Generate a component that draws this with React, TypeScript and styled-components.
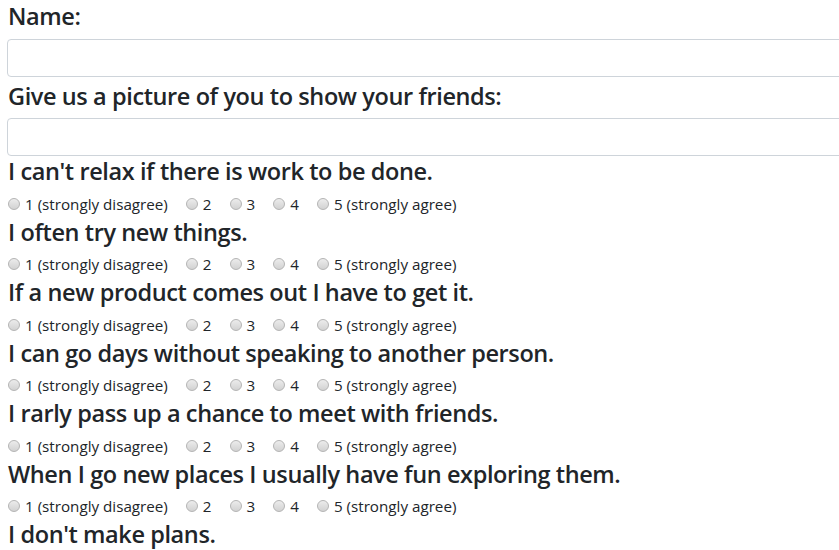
import React from "react";
import styled, { createGlobalStyle } from "styled-components";

const GlobalStyle = createGlobalStyle`
  html, body {
    margin: 0;
    padding: 0;
    background: #ffffff;
    overflow: hidden;
  }
  body {
    font-family: "Open Sans", "Noto Sans", sans-serif;
    color: #212529;
  }
`;

const Page = styled.form`
  padding: 2px 0 0 7px;
  overflow: hidden;
  width: 100vw;
  box-sizing: border-box;
`;

const Heading = styled.h4<{ $gap?: number }>`
  margin: 0 0 ${(p) => p.$gap ?? 8}px 0;
  font-size: 23.5px;
  line-height: 28.5px;
  font-weight: 600;
  letter-spacing: -0.4px;
  color: #212529;
  padding-left: 1px;
  white-space: nowrap;
`;

const Field = styled.input<{ $gapAfter: number }>`
  display: block;
  box-sizing: border-box;
  width: 900px;
  height: 38px;
  margin: 0 0 ${(p) => p.$gapAfter}px 0;
  padding: 6px 12px;
  border: 1px solid #ced4da;
  border-radius: 4px;
  background: #fff;
  font-size: 16px;
  outline: none;
`;

const Block = styled.div``;

const OptionRow = styled.div`
  display: flex;
  align-items: center;
  height: 24px;
  margin-bottom: 2px;
  font-size: 15.2px;
`;

const Option = styled.label`
  display: inline-flex;
  align-items: center;
  margin-right: 17px;
  white-space: nowrap;
  color: #212529;
`;

const Radio = styled.input.attrs({ type: "radio" })`
  appearance: none;
  -webkit-appearance: none;
  box-sizing: border-box;
  width: 12px;
  height: 12px;
  margin: 0 5px 0 1px;
  border-radius: 50%;
  border: 1px solid #b4b4b4;
  background: linear-gradient(#ececec, #d2d2d2);
`;

const questions = [
  "I can't relax if there is work to be done.",
  "I often try new things.",
  "If a new product comes out I have to get it.",
  "I can go days without speaking to another person.",
  "I rarly pass up a chance to meet with friends.",
  "When I go new places I usually have fun exploring them.",
  "I don't make plans.",
];

const options = ["1 (strongly disagree)", "2", "3", "4", "5 (strongly agree)"];

export default function App() {
  return (
    <>
      <GlobalStyle />
      <Page onSubmit={(e) => e.preventDefault()}>
        <Heading>Name:</Heading>
        <Field type="text" $gapAfter={5} />
        <Heading>Give us a picture of you to show your friends:</Heading>
        <Field type="text" $gapAfter={1} />
        {questions.map((q, qi) => (
          <Block key={qi}>
            <Heading $gap={6}>{q}</Heading>
            <OptionRow>
              {options.map((o, oi) => (
                <Option key={oi}>
                  <Radio name={`q${qi}`} value={oi + 1} />
                  {o}
                </Option>
              ))}
            </OptionRow>
          </Block>
        ))}
      </Page>
    </>
  );
}
